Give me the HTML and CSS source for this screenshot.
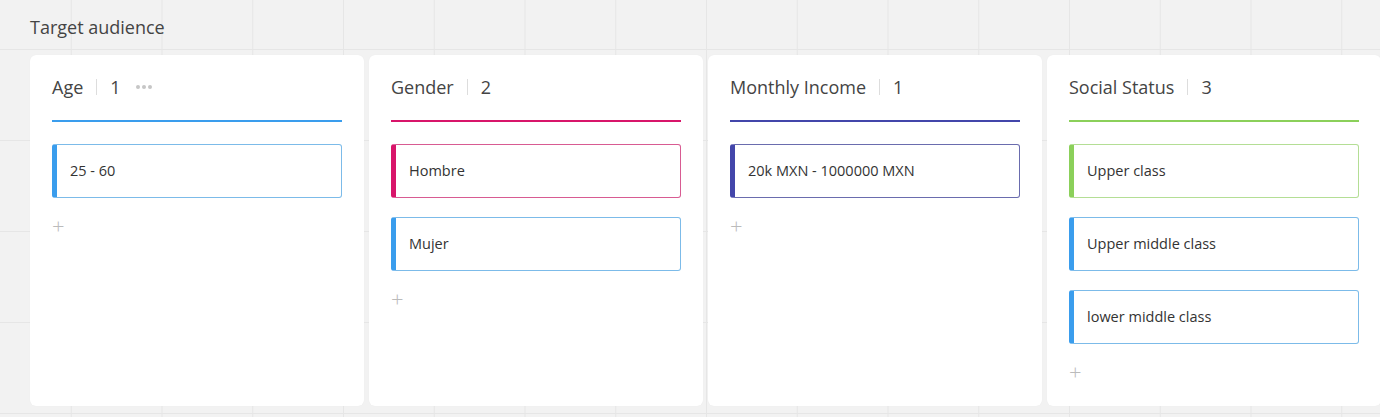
FILE: index.html
```html
<!DOCTYPE html>
<html>
<head>
<meta charset="utf-8">
<link rel="stylesheet" href="styles.css">
</head>
<body>
<div class="page">
  <h1 class="title">Target audience</h1>
  <div class="board">
    <section class="col c-blue">
      <header class="col-head"><span class="name">Age</span><span class="sep"></span><span class="count">1</span><span class="dots"><i></i><i></i><i></i></span></header>
      <div class="items">
        <div class="item c-blue">25 - 60</div>
      </div>
      <div class="add">+</div>
    </section>
    <section class="col c-pink">
      <header class="col-head"><span class="name">Gender</span><span class="sep"></span><span class="count">2</span></header>
      <div class="items">
        <div class="item c-pink">Hombre</div>
        <div class="item c-blue">Mujer</div>
      </div>
      <div class="add">+</div>
    </section>
    <section class="col c-indigo">
      <header class="col-head"><span class="name">Monthly Income</span><span class="sep"></span><span class="count">1</span></header>
      <div class="items">
        <div class="item c-indigo">20k MXN - 1000000 MXN</div>
      </div>
      <div class="add">+</div>
    </section>
    <section class="col c-green">
      <header class="col-head"><span class="name">Social Status</span><span class="sep"></span><span class="count">3</span></header>
      <div class="items">
        <div class="item c-green">Upper class</div>
        <div class="item c-blue">Upper middle class</div>
        <div class="item c-blue">lower middle class</div>
      </div>
      <div class="add">+</div>
    </section>
  </div>
</div>
</body>
</html>
```

FILE: styles.css
```css
html, body {
  margin: 0;
  padding: 0;
}
body {
  width: 1380px;
  height: 417px;
  overflow: hidden;
  font-family: "Open Sans", "Liberation Sans", sans-serif;
  color: #333;
  background-color: #f2f2f2;
  background-image:
    linear-gradient(to right, #e6e6e6 1px, transparent 1px),
    linear-gradient(to bottom, #e6e6e6 1px, transparent 1px);
  background-size: 90.75px 91px;
  background-position: -20px 49px;
}
.page {
  padding: 14px 0 0 30px;
}
.title {
  margin: 0;
  font-size: 18px;
  font-weight: 400;
  line-height: 26px;
  color: #444;
}
.board {
  display: flex;
  gap: 5px;
  margin-top: 15px;
}
.col {
  flex: 0 0 334px;
  height: 351px;
  box-sizing: border-box;
  background: #fff;
  border-radius: 6px;
  padding: 0 22px;
  box-shadow: 0 0 1px rgba(0,0,0,0.06);
}
.col-head {
  display: flex;
  align-items: center;
  height: 67px;
  box-sizing: border-box;
  padding-bottom: 1px;
  border-bottom: 2px solid var(--c);
  font-size: 18px;
  color: #444;
}
.sep {
  width: 1px;
  height: 16px;
  background: #ddd;
  margin: 0 13px 0 13px;
}
.count { color: #444; }
.dots {
  display: flex;
  gap: 2px;
  margin-left: 15px;
}
.dots i {
  width: 4px;
  height: 4px;
  border-radius: 50%;
  background: #c6c6c6;
}
.items {
  display: flex;
  flex-direction: column;
  gap: 19px;
  margin-top: 22px;
}
.item {
  height: 54px;
  box-sizing: border-box;
  border: 1px solid var(--l);
  border-left: 5px solid var(--c);
  border-radius: 3px;
  padding-left: 13px;
  display: flex;
  align-items: center;
  font-size: 14.5px;
  color: #333;
  padding-bottom: 2px;
}
.add {
  margin-top: 17px;
  margin-left: 0;
  font-size: 22px;
  line-height: 20px;
  font-weight: 300;
  color: #bbb;
}
.c-blue { --c: #3a9ded; --l: #7cbbe9; }
.c-pink { --c: #d8156a; --l: #d85b92; }
.c-indigo { --c: #4346aa; --l: #6a6cae; }
.c-green { --c: #8bd05a; --l: #b4de95; }
```
